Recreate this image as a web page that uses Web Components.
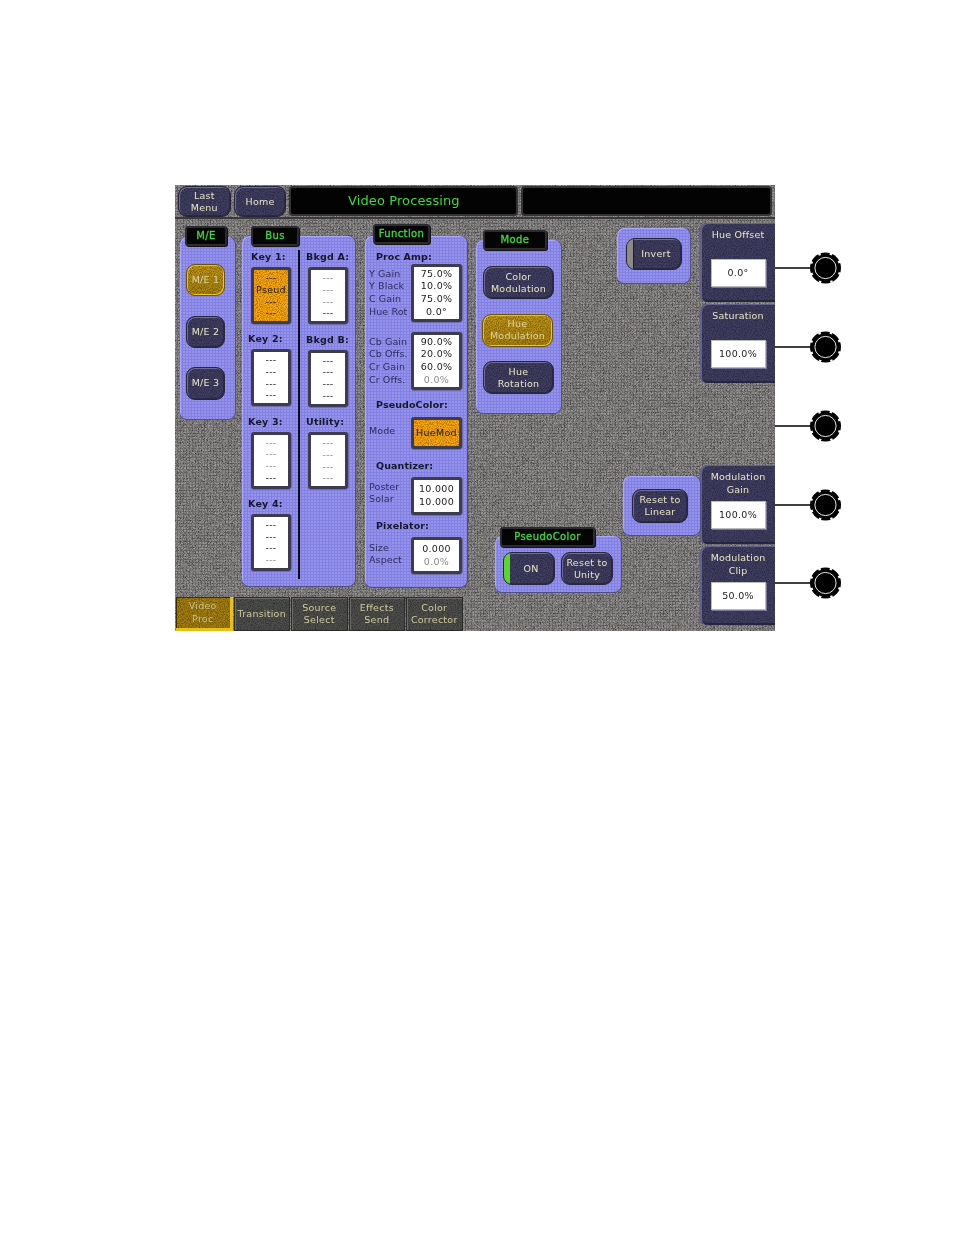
<!DOCTYPE html>
<html>
<head>
<meta charset="utf-8">
<title>Video Processing</title>
<style>
  :root {
    --ui-font: "DejaVu Sans", Verdana, sans-serif;
    --noise: url("data:image/svg+xml,%3Csvg xmlns='http://www.w3.org/2000/svg' width='180' height='180'%3E%3Cfilter id='n'%3E%3CfeTurbulence type='fractalNoise' baseFrequency='1.4' numOctaves='2' seed='4'/%3E%3CfeColorMatrix values='0 0 0 0 0 0 0 0 0 0 0 0 0 0 0 1.1 0 0 0 -.32'/%3E%3C/filter%3E%3Crect width='180' height='180' filter='url(%23n)'/%3E%3C/svg%3E");
    --noise-soft: url("data:image/svg+xml,%3Csvg xmlns='http://www.w3.org/2000/svg' width='180' height='180'%3E%3Cfilter id='n'%3E%3CfeTurbulence type='fractalNoise' baseFrequency='.9' numOctaves='2' seed='9'/%3E%3CfeColorMatrix values='0 0 0 0 0 0 0 0 0 0 0 0 0 0 0 .9 0 0 0 -.34'/%3E%3C/filter%3E%3Crect width='180' height='180' filter='url(%23n)'/%3E%3C/svg%3E");
    --dots: radial-gradient(circle at 1px 1px, rgba(255,255,255,.16) 0 .7px, transparent 1px);
    --periwinkle: #8280e4;
    --navy: #403e62;
    --pale: #e9e6c4;
    --green: #3fd93f;
  }
  body { margin: 0; background: #fff; }
</style>
</head>
<body>
<video-page></video-page>

<script>
  // small helper so each element only has to give its css and markup
  function shadow(el, css, html) {
    el.attachShadow({ mode: 'open' });
    el.shadowRoot.innerHTML = '<style>' + css + '</style>' + html;
  }

  // "~" in front of a value means the dim grey text of the reference
  function lineHtml(v) {
    return v[0] === '~' ? '<div style="color:#8a8a8a">' + v.slice(1) + '</div>' : '<div>' + v + '</div>';
  }

  class UiButton extends HTMLElement {
    connectedCallback() {
      shadow(this, `
        :host {
          display: flex; align-items: center; justify-content: center; box-sizing: border-box;
          width: var(--w, 54px); height: var(--h, 33px);
          border-radius: 9px; border: 1px solid #26253a;
          background: var(--noise-soft), var(--navy);
          box-shadow: inset 1px 1px 0 #6f6d96, inset -1px -1px 0 #2a2942;
          color: var(--pale); font: 9.5px/12px var(--ui-font); letter-spacing: .25px;
          text-align: center; position: relative; overflow: hidden;
        }
        :host([active]) {
          background: var(--noise-soft), linear-gradient(#c29616, #a98208);
          border-color: #6b5206;
          box-shadow: inset 1px 1px 0 #e6bf3a, inset -1px -1px 0 #f0c81c;
          color: #dcd4a4;
        }
        :host([gutter]), :host([led]) { padding-left: 4px; }
        :host([gutter])::before, :host([led])::before {
          content: ""; position: absolute; left: 0; top: 0; bottom: 0; width: 6px;
        }
        :host([gutter])::before { background: #8d8b84; border-right: 1px solid #1d1c2c; }
        :host([led])::before { background: #5bd42c; }
      `, '<slot></slot>');
    }
  }

  class UiTitleTab extends HTMLElement {
    connectedCallback() {
      shadow(this, `
        :host {
          display: flex; align-items: center; justify-content: center; box-sizing: border-box;
          position: absolute; left: var(--tx, 5px); top: var(--ty, -11px);
          width: var(--tw, 42px); height: 20px;
          background: #050505; border: 2px solid #2d2b30; border-radius: 3px;
          box-shadow: 1px 1px 0 #111;
          color: var(--green); font: 10px/1 var(--ui-font); letter-spacing: .4px;
          -webkit-text-stroke: .3px var(--green);
        }
      `, '<slot></slot>');
    }
  }

  class UiPanel extends HTMLElement {
    connectedCallback() {
      const label = this.getAttribute('label');
      shadow(this, `
        :host {
          display: block; box-sizing: border-box; position: relative;
          background: var(--dots) 0 0 / 3px 3px, var(--periwinkle);
          border-radius: 7px;
          box-shadow: inset 1px 1px 0 #a9a8f2, 0 1px 0 #4f4e86, 1px 0 0 #4f4e86;
        }
      `, (label ? '<ui-title-tab>' + label + '</ui-title-tab>' : '') + '<slot></slot>');
    }
  }

  // white value box, one slotted line per row
  class UiReadout extends HTMLElement {
    connectedCallback() {
      shadow(this, `
        :host {
          display: flex; flex-direction: column; justify-content: center; box-sizing: border-box;
          width: var(--w, 51px); height: var(--h, 58px);
          background: #fff; border: 3px solid #3d3c4e; border-radius: 3px;
          box-shadow: 0 1px 0 #6f6ea8, 1px 0 0 #6f6ea8;
          color: #222; font: 9.5px/var(--lh, 12.7px) var(--ui-font); letter-spacing: .3px;
          text-align: center;
        }
        :host([on]) { background: var(--noise-soft), #ffa80c; color: #1c1408; }
      `, '<slot></slot>');
    }
  }

  class UiBusGroup extends HTMLElement {
    connectedCallback() {
      const lines = (this.getAttribute('lines') || '--- --- --- ---').split(' ');
      const on = this.hasAttribute('on') ? ' on' : '';
      shadow(this, `
        :host { display: flex; flex-direction: column; align-items: flex-start; height: 82.5px; }
        .label {
          height: 17px; margin-left: var(--lx, 8px); white-space: nowrap;
          font: bold 9.5px/14px var(--ui-font); color: #17172c; letter-spacing: .2px;
        }
        ui-readout { --w: 40px; --h: 57px; --lh: 11.7px; margin-left: 8px; }
      `, '<div class="label">' + this.getAttribute('label') + '</div><ui-readout' + on + '>' +
        lines.map(lineHtml).join('') + '</ui-readout>');
    }
  }

  // text labels at left, readout at right (function panel rows)
  class UiLabelledRow extends HTMLElement {
    connectedCallback() {
      const names = this.getAttribute('names').split('|');
      const vals = this.getAttribute('values').split('|');
      const on = this.hasAttribute('on') ? ' on' : '';
      shadow(this, `
        :host { display: flex; align-items: center; justify-content: space-between; padding: 0 5px 0 4px; }
        .names {
          font: 9.5px/var(--nlh, 12.7px) var(--ui-font); color: #2e2d5c; letter-spacing: .1px;
          white-space: nowrap; margin-top: var(--ny, 0);
        }
      `, '<div class="names">' + names.join('<br>') + '</div><ui-readout' + on + '>' +
        vals.map(lineHtml).join('') + '</ui-readout>');
    }
  }

  class UiHeading extends HTMLElement {
    connectedCallback() {
      shadow(this, `
        :host {
          display: block; padding-left: 11px; height: 14px; white-space: nowrap;
          font: bold 9.5px/14px var(--ui-font); color: #17172c; letter-spacing: .1px;
        }
      `, '<slot></slot>');
    }
  }

  // dark soft-knob cell on the right edge of the screen
  class UiParam extends HTMLElement {
    connectedCallback() {
      shadow(this, `
        :host {
          display: flex; flex-direction: column; align-items: center; box-sizing: border-box; flex: none;
          width: 75px; height: 79px; padding: 6px 0 0 1px;
          background: var(--noise-soft), var(--navy);
          border-radius: 7px 0 0 7px;
          box-shadow: inset 2px 1px 0 #62608f, inset 0 -2px 0 #26253e;
          color: var(--pale); font: 9.5px/12.5px var(--ui-font); letter-spacing: .2px;
          text-align: center;
        }
        .title { height: 30px; }
        ui-readout {
          --w: 55px; --h: 28px;
          border: 0; border-radius: 0; background: #fff;
          box-shadow: inset 0 0 0 1px #bbb, 1px 1px 0 #77769a;
        }
      `, '<div class="title">' + this.getAttribute('label') + '</div><ui-readout>' +
        this.getAttribute('value') + '</ui-readout>');
    }
  }

  // black gear: wide teeth with eight narrow notches, white ring inside
  class UiKnob extends HTMLElement {
    connectedCallback() {
      let notches = '';
      for (let a = 0; a < 360; a += 45) {
        notches += '<rect x="49" y="0" width="2.4" height="2.2" fill="#fff" transform="rotate(' + (a + 22.5) + ' 50.5 16)"/>';
      }
      shadow(this, `
        :host { display: flex; align-items: center; height: 78.75px; }
        svg { width: 68px; height: 32px; display: block; }
      `, '<svg viewBox="0 0 68 32" fill="#000"><line x1="0" y1="16" x2="36" y2="16" stroke="#000" stroke-width="1.5"/>' +
        '<circle cx="50.5" cy="16" r="15.5"/>' + notches +
        '<circle cx="50.5" cy="16" r="10.6" fill="none" stroke="#fff" stroke-width=".9"/></svg>');
    }
  }

  class UiPageTab extends HTMLElement {
    connectedCallback() {
      shadow(this, `
        :host {
          display: flex; align-items: center; justify-content: center; box-sizing: border-box;
          width: 56.5px; height: 34px; text-align: center;
          background: var(--noise-soft), #4e4e4c; border: 1px solid #2a2a2a;
          box-shadow: inset 1px 1px 0 #6a6a66;
          color: #cfcb9c; font: 9.5px/12.5px var(--ui-font); letter-spacing: .25px;
        }
        :host([active]) {
          background: var(--noise-soft), #a47e0e;
          border: 0; border-right: 3px solid #e8be18; border-bottom: 3px solid #e8be18;
          box-shadow: inset 1px 1px 0 #3b2c05;
          color: #c8c094;
        }
      `, '<slot></slot>');
    }
  }

  class VideoPage extends HTMLElement {
    connectedCallback() {
      shadow(this, `
        :host { display: flex; padding: 185px 0 0 175px; width: 779px; }
        .console {
          width: 600px; height: 446px; flex: none; display: flex; flex-direction: column;
          background: var(--dots) 0 0 / 3px 3px, var(--noise), #8d8989; overflow: hidden; filter: blur(.25px);
        }
        .topbar {
          height: 34px; display: flex; gap: 3px; padding: 1px 3px 0; box-sizing: border-box; flex: none;
          border-bottom: 2px solid #3a3a3a; margin-bottom: 4px;
        }
        .topbar ui-button { --w: 53px; --h: 31px; }
        .screen {
          background: #030303; border: 2px solid #333; border-radius: 4px; height: 30px; box-sizing: border-box;
          color: var(--green); font: 13px/26px var(--ui-font); letter-spacing: .1px; text-align: center;
        }
        .title { width: 230px; }
        .blank { width: 252px; }
        .work { display: flex; height: 374px; flex: none; }
        .col { display: flex; flex-direction: column; flex: none; }

        .me { width: 55px; height: 182px; margin: 14px 0 0 5px; padding-top: 27px; box-sizing: border-box; }
        .me ui-button { --w: 39px; --h: 33px; margin: 0 0 19.5px 6px; }

        .bus { width: 113px; height: 350px; margin: 13px 0 0 7px; display: flex; padding-top: 14px; box-sizing: border-box; --tx: 9px; --ty: -10px; --tw: 48px; }
        .bus .left { padding-left: 1px; width: 55px; border-right: 2px solid #0c0c1c; height: 329px; box-sizing: content-box; --lx: 5px; }
        .bus .left ui-bus-group:first-child { --lx: 8px; }
        .bus .right { width: 55px; --lx: 6px; }

        .fn { width: 103px; height: 351px; margin: 13px 0 0 10px; padding-top: 14px; box-sizing: border-box; --tx: 8px; --ty: -12px; --tw: 57px; }

        .mid { width: 145px; margin-left: 9px; justify-content: space-between; height: 369px; }
        .mode { width: 85px; height: 173px; margin-top: 17px; padding: 26px 0 0 7px; box-sizing: border-box; --tx: 7px; --ty: -10px; --tw: 64px; }
        .mode ui-button { --w: 71px; --h: 33px; margin-bottom: 14.5px; }
        .pseudo { width: 126px; height: 56px; margin-left: 19px; display: flex; gap: 6px; padding: 16px 0 0 8px; box-sizing: border-box; --tx: 5px; --ty: -9px; --tw: 95px; }
        .pseudo ui-button { --w: 52px; --h: 33px; }

        .side { width: 78px; margin-left: 2px; }
        .invert { width: 73px; height: 55px; margin: 5px 0 0 -6px; padding: 10px 0 0 9px; box-sizing: border-box; flex: none; }
        .invert ui-button { --w: 56px; --h: 32px; }
        .reset { width: 77px; height: 59px; margin-top: 193px; padding: 13px 0 0 9px; box-sizing: border-box; flex: none; }
        .reset ui-button { --w: 56px; --h: 34px; }

        .params { width: 75px; margin-left: -1px; gap: 2px; }
        .params .gap { height: 78px; flex: none; }

        .tabs { display: flex; gap: 1px; padding-left: 1px; flex: none; }

        .knobs { padding-top: 44px; flex: none; width: 70px; }
      `, `
        <div class="console">
          <div class="topbar">
            <ui-button>Last<br>Menu</ui-button>
            <ui-button>Home</ui-button>
            <div class="screen title">Video Processing</div>
            <div class="screen blank"></div>
          </div>
          <div class="work">
            <ui-panel class="me col" label="M/E">
              <ui-button active>M/E 1</ui-button>
              <ui-button>M/E 2</ui-button>
              <ui-button>M/E 3</ui-button>
            </ui-panel>

            <ui-panel class="bus" label="Bus">
              <div class="col left">
                <ui-bus-group label="Key 1:" on lines="--- Pseud --- ---"></ui-bus-group>
                <ui-bus-group label="Key 2:"></ui-bus-group>
                <ui-bus-group label="Key 3:" lines="~--- ~--- ~--- ---"></ui-bus-group>
                <ui-bus-group label="Key 4:" lines="--- --- --- ~---"></ui-bus-group>
              </div>
              <div class="col right">
                <ui-bus-group label="Bkgd A:" lines="~--- ~--- ~--- ---"></ui-bus-group>
                <ui-bus-group label="Bkgd B:"></ui-bus-group>
                <ui-bus-group label="Utility:" lines="~--- ~--- ~--- ~---"></ui-bus-group>
              </div>
            </ui-panel>

            <ui-panel class="fn" label="Function">
              <ui-heading>Proc Amp:</ui-heading>
              <ui-labelled-row names="Y Gain|Y Black|C Gain|Hue Rot" values="75.0%|10.0%|75.0%|0.0°"></ui-labelled-row>
              <ui-labelled-row style="margin-top:10px" names="Cb Gain|Cb Offs.|Cr Gain|Cr Offs." values="90.0%|20.0%|60.0%|~0.0%"></ui-labelled-row>
              <ui-heading style="margin-top:8px">PseudoColor:</ui-heading>
              <ui-labelled-row style="margin-top:5px;--h:32px;--ny:-3px" on names="Mode" values="HueMod"></ui-labelled-row>
              <ui-heading style="margin-top:10px">Quantizer:</ui-heading>
              <ui-labelled-row style="margin-top:4px;--h:38px;--nlh:12px;--ny:-6px" names="Poster|Solar" values="10.000|10.000"></ui-labelled-row>
              <ui-heading style="margin-top:4px">Pixelator:</ui-heading>
              <ui-labelled-row style="margin-top:4px;--h:37px;--nlh:12px;--ny:-3px" names="Size|Aspect" values="0.000|~0.0%"></ui-labelled-row>
            </ui-panel>

            <div class="col mid">
              <ui-panel class="mode" label="Mode">
                <ui-button>Color<br>Modulation</ui-button>
                <ui-button active style="margin-left:-1px">Hue<br>Modulation</ui-button>
                <ui-button>Hue<br>Rotation</ui-button>
              </ui-panel>
              <ui-panel class="pseudo" label="PseudoColor">
                <ui-button led>ON</ui-button>
                <ui-button>Reset to<br>Unity</ui-button>
              </ui-panel>
            </div>

            <div class="col side">
              <ui-panel class="invert"><ui-button gutter>Invert</ui-button></ui-panel>
              <ui-panel class="reset"><ui-button>Reset to<br>Linear</ui-button></ui-panel>
            </div>

            <div class="col params">
              <ui-param label="Hue Offset" value="0.0°"></ui-param>
              <ui-param label="Saturation" value="100.0%"></ui-param>
              <div class="gap"></div>
              <ui-param label="Modulation<br>Gain" value="100.0%"></ui-param>
              <ui-param label="Modulation<br>Clip" value="50.0%"></ui-param>
            </div>
          </div>
          <div class="tabs">
            <ui-page-tab active>Video<br>Proc</ui-page-tab>
            <ui-page-tab>Transition</ui-page-tab>
            <ui-page-tab>Source<br>Select</ui-page-tab>
            <ui-page-tab>Effects<br>Send</ui-page-tab>
            <ui-page-tab>Color<br>Corrector</ui-page-tab>
          </div>
        </div>
        <div class="knobs">
          <ui-knob></ui-knob><ui-knob></ui-knob><ui-knob></ui-knob><ui-knob></ui-knob><ui-knob></ui-knob>
        </div>
      `);
    }
  }

  customElements.define('ui-button', UiButton);
  customElements.define('ui-title-tab', UiTitleTab);
  customElements.define('ui-panel', UiPanel);
  customElements.define('ui-readout', UiReadout);
  customElements.define('ui-bus-group', UiBusGroup);
  customElements.define('ui-labelled-row', UiLabelledRow);
  customElements.define('ui-heading', UiHeading);
  customElements.define('ui-param', UiParam);
  customElements.define('ui-knob', UiKnob);
  customElements.define('ui-page-tab', UiPageTab);
  customElements.define('video-page', VideoPage);
</script>
</body>
</html>
